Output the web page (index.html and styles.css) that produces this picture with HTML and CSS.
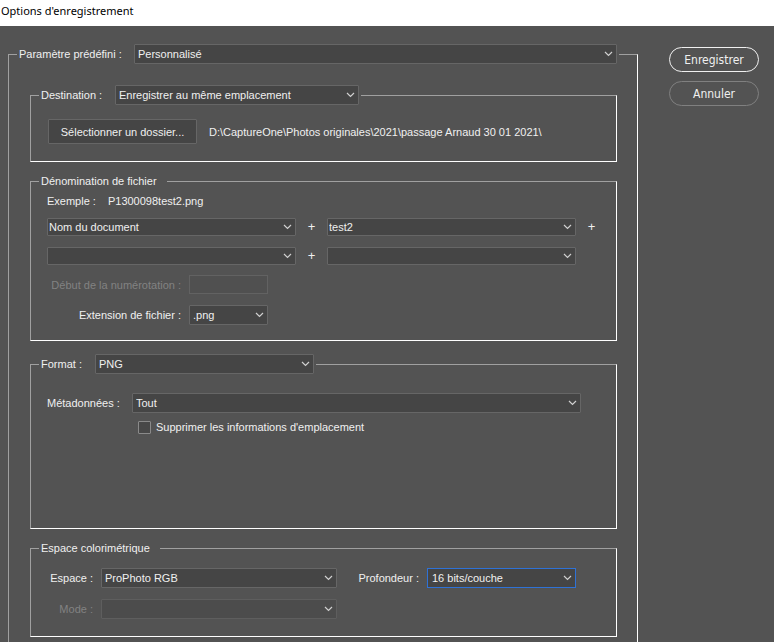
FILE: index.html
```html
<!DOCTYPE html>
<html lang="fr">
<head>
    <meta charset="UTF-8">
    <meta name="viewport" content="width=device-width, initial-scale=1.0">
    <title>Options d'enregistrement</title>
    <link rel="stylesheet" href="styles.css">
</head>
<body>
    <header class="title-bar">
        <h1>Options d'enregistrement</h1>
    </header>
    <form class="dialog">
        <fieldset class="group preset">
            <legend>
                <div class="legend-row">
                    <label class="preset-label" for="preset">Paramètre prédéfini :</label>
                    <select id="preset" class="preset-select">
                        <option>Personnalisé</option>
                    </select>
                </div>
            </legend>

            <div class="preset-body">
                <!-- Destination -->
                <fieldset class="group destination">
                    <legend>
                        <div class="legend-row">
                            <label class="destination-label" for="destination">Destination :</label>
                            <select id="destination" class="destination-select">
                                <option>Enregistrer au même emplacement</option>
                            </select>
                        </div>
                    </legend>
                    <div class="folder-row">
                        <button type="button" class="folder-button">Sélectionner un dossier...</button>
                        <span>D:\CaptureOne\Photos originales\2021\passage Arnaud 30 01 2021\</span>
                    </div>
                </fieldset>

                <!-- File naming -->
                <fieldset class="group naming">
                    <legend class="text-legend">Dénomination de fichier</legend>
                    <div class="group-body">
                        <p class="example"><span>Exemple :</span><span>P1300098test2.png</span></p>
                        <div class="name-grid">
                            <select aria-label="Élément 1"><option>Nom du document</option></select>
                            <span>+</span>
                            <select aria-label="Élément 2"><option>test2</option></select>
                            <span>+</span>
                            <select aria-label="Élément 3"><option></option></select>
                            <span>+</span>
                            <select aria-label="Élément 4"><option></option></select>
                        </div>
                        <div class="file-grid">
                            <label class="disabled" for="numbering">Début de la numérotation :</label>
                            <input type="text" id="numbering" disabled>
                            <label for="extension">Extension de fichier :</label>
                            <select id="extension"><option>.png</option></select>
                        </div>
                    </div>
                </fieldset>

                <!-- Format -->
                <fieldset class="group format">
                    <legend>
                        <div class="legend-row">
                            <label class="format-label" for="format">Format :</label>
                            <select id="format" class="format-select">
                                <option>PNG</option>
                            </select>
                        </div>
                    </legend>
                    <div class="group-body">
                        <div class="metadata-row">
                            <label for="metadata">Métadonnées :</label>
                            <select id="metadata"><option>Tout</option></select>
                        </div>
                        <div class="check-row">
                            <input type="checkbox" id="location">
                            <label for="location">Supprimer les informations d'emplacement</label>
                        </div>
                    </div>
                </fieldset>

                <!-- Color space -->
                <fieldset class="group color">
                    <legend class="text-legend">Espace colorimétrique</legend>
                    <div class="group-body color-grid">
                        <label for="space">Espace :</label>
                        <select id="space"><option>ProPhoto RGB</option></select>
                        <label for="depth">Profondeur :</label>
                        <select id="depth" class="active"><option>16 bits/couche</option></select>
                        <label class="disabled" for="mode">Mode :</label>
                        <select id="mode" disabled><option></option></select>
                    </div>
                </fieldset>
            </div>
        </fieldset>

        <div class="actions">
            <button type="submit" class="primary">Enregistrer</button>
            <button type="button">Annuler</button>
        </div>
    </form>
</body>
</html>
```

FILE: styles.css
```css
* {
    box-sizing: border-box;
}

body {
    font-family: "Liberation Sans", Arial, sans-serif;
    font-size: 11px;
    line-height: 14px;
    background-color: #535353;
    color: #f0f0f0;
    margin: 0;
    height: 100vh;
    overflow: hidden;
}

.title-bar {
    background-color: #ffffff;
    color: #000000;
    height: 26px;
    padding: 3px 1px;
}

.title-bar h1 {
    font-family: "Noto Sans", sans-serif;
    font-size: 11px;
    font-weight: normal;
    line-height: 16px;
    margin: 0;
}

.dialog {
    display: flex;
    align-items: flex-start;
    padding: 18px 15px 0 8px;
    gap: 31px;
}

/* Group boxes */
.group {
    border: 1px solid;
    border-color: #a0a0a0 #ffffff #ffffff #a0a0a0;
    margin: 0;
    padding: 0 8px;
    min-width: 0;
}

legend {
    padding: 0 2px;
}

.text-legend {
    padding-right: 10px;
}

.legend-row {
    display: flex;
    align-items: center;
}

.preset {
    flex: 1;
    padding: 0 18px 16px 8px;
}

.preset > legend {
    width: 100%;
}

.preset-body {
    padding: 21px 2px 0 13px;
}

.preset-label {
    width: 115px;
}

.preset-select {
    flex: 1;
}

.destination-label {
    width: 74px;
}

.destination-select {
    width: 244px;
}

.format-label {
    width: 54px;
}

.format-select {
    width: 219px;
}

.destination {
    padding-bottom: 17px;
    margin-bottom: 12px;
}

.naming {
    padding-bottom: 15px;
    margin-bottom: 13px;
}

.format {
    min-height: 175px;
    margin-bottom: 12px;
}

.color {
    padding-bottom: 17px;
}

.group-body {
    padding-left: 8px;
}

/* Controls */
select,
input,
button {
    font: inherit;
    color: inherit;
    margin: 0;
}

select {
    appearance: none;
    height: 20px;
    min-width: 0;
    padding: 0 16px 0 3px;
    border: 1px solid #666666;
    border-radius: 1px;
    background: #454545 url("data:image/svg+xml,%3Csvg xmlns='http://www.w3.org/2000/svg' width='9' height='6'%3E%3Cpath d='M1 1l3.500 3.500L8 1' fill='none' stroke='%23d0d0d0' stroke-width='1.200'/%3E%3C/svg%3E") no-repeat right 3px center;
    outline: none;
}

select:disabled {
    background-color: #4c4c4c;
    border-color: #5e5e5e;
    opacity: 1;
}

select.active {
    border-color: #2f72d6;
    border-radius: 0;
    padding-left: 4px;
}

input[type="text"] {
    height: 19px;
    width: 100%;
    padding: 0 3px;
    border: 1px solid #626262;
    background-color: #505050;
}

input[type="checkbox"] {
    appearance: none;
    width: 13px;
    height: 13px;
    border: 1px solid #8a8a8a;
    border-radius: 1px;
    background-color: #484848;
}

input[type="checkbox"]:checked {
    background-color: #2d6cc0;
}

.disabled {
    color: #828282;
}

.folder-row {
    display: flex;
    align-items: center;
    gap: 12px;
    padding: 14px 0 0 9px;
    white-space: nowrap;
}

.folder-button {
    width: 149px;
    height: 25px;
    padding: 0;
    background-color: #454545;
    border: 1px solid #666666;
    border-radius: 1px;
}

.example {
    display: flex;
    gap: 12px;
    margin: 0;
    padding: 6px 0 10px;
}

.name-grid {
    display: grid;
    grid-template-columns: 1fr 31px 1fr 31px;
    row-gap: 11px;
    align-items: center;
    padding-right: 1px;
}

.name-grid select {
    height: 18px;
    padding-left: 1px;
}

.name-grid span {
    text-align: center;
    font-size: 13px;
}

.file-grid {
    display: grid;
    grid-template-columns: 134px 79px;
    gap: 11px 8px;
    align-items: center;
    padding-top: 10px;
}

.file-grid label,
.color-grid label {
    text-align: right;
    white-space: nowrap;
    justify-self: end;
}

.metadata-row {
    display: flex;
    align-items: center;
    padding: 19px 27px 0 0;
}

.metadata-row label {
    width: 85px;
}

.metadata-row select {
    flex: 1;
}

.check-row {
    display: flex;
    align-items: center;
    gap: 5px;
    padding: 7px 0 0 91px;
}

.color-grid {
    display: grid;
    grid-template-columns: 46px 236fr 74px 149fr;
    gap: 11px 8px;
    align-items: center;
    padding-top: 13px;
    padding-right: 32px;
}

/* Dialog buttons */
.actions {
    display: flex;
    flex-direction: column;
    gap: 9px;
    width: 90px;
    padding-top: 3px;
}

.actions button {
    height: 25px;
    padding: 0;
    font-family: "DejaVu Sans Condensed", "DejaVu Sans", sans-serif;
    font-size: 12px;
    background: none;
    border: 1px solid #808080;
    border-radius: 13px;
}

.actions .primary {
    border-color: #f0f0f0;
}
```
